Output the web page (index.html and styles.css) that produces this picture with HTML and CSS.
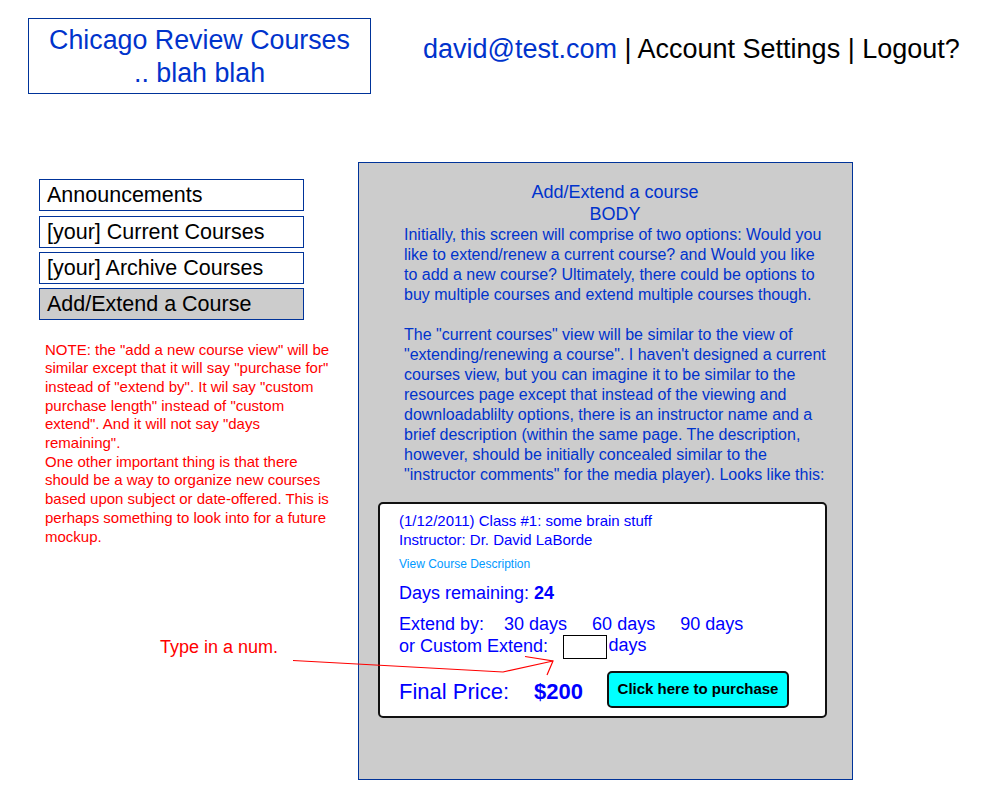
FILE: index.html
```html
<!DOCTYPE html>
<html>
<head>
<meta charset="utf-8">
<title>Add/Extend a Course</title>
<link rel="stylesheet" href="styles.css">
</head>
<body>
<div class="page">
  <header class="header">
    <div class="logo">Chicago Review Courses<br>.. blah blah</div>
    <div class="account"><span class="email">david@test.com</span> | Account Settings | Logout?</div>
  </header>

  <main class="main">
    <aside class="sidebar">
      <nav class="nav">
        <div class="nav-item">Announcements</div>
        <div class="nav-item">[your] Current Courses</div>
        <div class="nav-item">[your] Archive Courses</div>
        <div class="nav-item active">Add/Extend a Course</div>
      </nav>
      <p class="note">NOTE: the "add a new course view" will be<br>similar except that it will say "purchase for"<br>instead of "extend by". It wil say "custom<br>purchase length" instead of "custom<br>extend". And it will not say "days<br>remaining".<br>One other important thing is that there<br>should be a way to organize new courses<br>based upon subject or date-offered. This is<br>perhaps something to look into for a future<br>mockup.</p>
      <div class="hint">Type in a num.</div>
    </aside>

    <section class="panel">
      <div class="intro">
        <div class="title">Add/Extend a course<br>BODY</div>
        <p class="para">Initially, this screen will comprise of two options: Would you<br>like to extend/renew a current course? and Would you like<br>to add a new course? Ultimately, there could be options to<br>buy multiple courses and extend multiple courses though.</p>
        <p class="para second">The "current courses" view will be similar to the view of<br>"extending/renewing a course". I haven't designed a current<br>courses view, but you can imagine it to be similar to the<br>resources page except that instead of the viewing and<br>downloadablilty options, there is an instructor name and a<br>brief description (within the same page. The description,<br>however, should be initially concealed similar to the<br>"instructor comments" for the media player). Looks like this:</p>
      </div>

      <div class="card">
        <div class="c-title">(1/12/2011) Class #1: some brain stuff<br>Instructor: Dr. David LaBorde</div>
        <div class="c-link">View Course Description</div>
        <div class="c-days">Days remaining: <b>24</b></div>
        <div class="c-extend">Extend by:<span class="opt first">30 days</span><span class="opt">60 days</span><span class="opt">90 days</span></div>
        <div class="c-custom">or Custom Extend:<span class="num-box"></span><span class="days">days</span></div>
        <div class="c-final">
          <span class="price-label">Final Price:</span>
          <span class="price">$200</span>
          <div class="buy">Click here to purchase</div>
        </div>
      </div>
    </section>
  </main>

  <svg class="arrow" width="1000" height="800" viewBox="0 0 1000 800">
    <polyline points="293,660.5 503,672 553,661" fill="none" stroke="#ff0000" stroke-width="1.2"/>
    <polyline points="525,656.5 553,661 547,675" fill="none" stroke="#ff0000" stroke-width="1.2"/>
  </svg>
</div>
</body>
</html>
```
FILE: styles.css
```css
* { box-sizing: border-box; }

html, body {
  margin: 0;
  padding: 0;
  background: #ffffff;
}

body {
  font-family: "Liberation Sans", Arial, sans-serif;
  color: #000;
}

.page {
  position: relative;
  width: 1000px;
  height: 800px;
  overflow: hidden;
}

/* Header */
.header {
  display: flex;
  align-items: flex-start;
  padding: 18px 0 0 28px;
}

.logo {
  width: 343px;
  border: 1px solid #003399;
  text-align: center;
  font-size: 26.8px;
  line-height: 33px;
  padding: 5px 0 3px;
  color: #0033cc;
  white-space: nowrap;
}

.account {
  margin-left: 52px;
  margin-top: 16px;
  font-size: 27px;
  line-height: 31px;
  white-space: nowrap;
}

.email { color: #0033cc; }

/* Main */
.main {
  display: flex;
  align-items: flex-start;
  margin-top: 68px;
}

.sidebar {
  margin-left: 39px;
  margin-top: 17px;
  width: 265px;
}

.nav-item {
  height: 32px;
  border: 1px solid #003399;
  padding-left: 7px;
  font-size: 21.5px;
  line-height: 30px;
  white-space: nowrap;
  margin-bottom: 4px;
}

.nav-item:first-child { margin-bottom: 5px; }

.nav-item.active {
  background: #cccccc;
  margin-bottom: 0;
}

.note {
  margin: 20.5px 0 0;
  padding-left: 6px;
  color: #ff0000;
  font-size: 15px;
  line-height: 18.7px;
  white-space: nowrap;
}

.hint {
  margin-top: 91px;
  margin-left: 121px;
  color: #ff0000;
  font-size: 18px;
  line-height: 21px;
  white-space: nowrap;
}

/* Body panel */
.panel {
  margin-left: 54px;
  width: 495px;
  height: 618px;
  border: 1px solid #003399;
  background: #cccccc;
  padding-top: 17.5px;
}

.intro {
  margin-left: 45px;
  width: 422px;
  color: #0033cc;
}

.title {
  text-align: center;
  font-size: 18px;
  line-height: 22px;
}

.para {
  margin: 0;
  font-size: 16px;
  line-height: 20px;
  white-space: nowrap;
}

.para.second { margin-top: 20.5px; }

/* Card */
.card {
  margin: 16.5px 0 0 19px;
  width: 449px;
  border: 2px solid #111111;
  border-radius: 5px;
  background: #ffffff;
  padding: 7px 19px 8.4px;
  color: #0000ff;
}

.c-title {
  font-size: 15px;
  line-height: 19px;
  white-space: nowrap;
}

.c-link {
  margin-top: 7px;
  font-size: 12px;
  line-height: 16px;
  color: #0099ff;
}

.c-days {
  margin-top: 10.5px;
  font-size: 18px;
  line-height: 22px;
}

.c-extend {
  margin-top: 9.5px;
  font-size: 18px;
  line-height: 21px;
  white-space: nowrap;
}

.opt { margin-left: 25px; }
.opt.first { margin-left: 20px; }

.c-custom {
  font-size: 18px;
  line-height: 21px;
  white-space: nowrap;
}

.num-box {
  display: inline-block;
  vertical-align: middle;
  width: 44px;
  height: 24px;
  margin-left: 15px;
  border: 1px solid #000000;
  background: #ffffff;
}

.days { margin-left: 1.5px; }

.c-final {
  display: flex;
  align-items: flex-start;
  margin-top: 12px;
}

.price-label,
.price {
  margin-top: 8.4px;
  font-size: 22px;
  line-height: 26px;
  white-space: nowrap;
}

.price {
  margin-left: 25px;
  font-weight: bold;
}

.buy {
  margin-left: 24px;
  width: 182px;
  height: 37px;
  border: 2px solid #111111;
  border-radius: 5px;
  background: #00ffff;
  color: #000000;
  font-size: 15px;
  font-weight: bold;
  line-height: 32px;
  text-align: center;
  white-space: nowrap;
}

/* Annotation arrow overlay */
.arrow {
  position: absolute;
  left: 0;
  top: 0;
  pointer-events: none;
}
```
